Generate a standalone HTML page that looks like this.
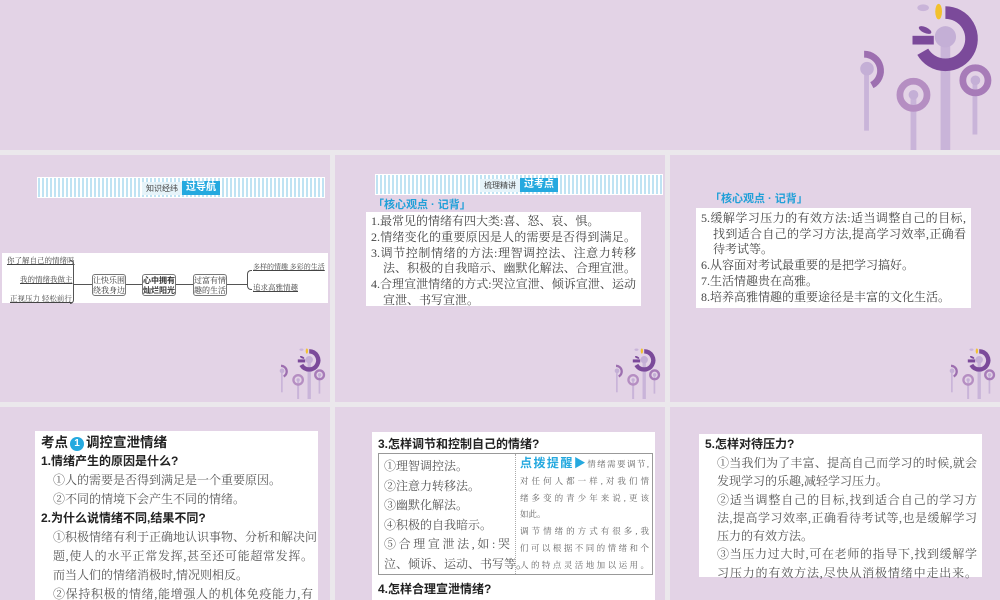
<!DOCTYPE html>
<html><head><meta charset="utf-8">
<style>
*{margin:0;padding:0;box-sizing:border-box}
body{width:1000px;height:600px;background:#ebe8ec;position:relative;overflow:hidden;font-family:"Liberation Serif","Noto Serif CJK SC",serif;color:#333}
.p{position:absolute;background:#e3d3e6;overflow:hidden}
.w{position:absolute;background:#fff}
.ban{position:absolute;height:21px;background:repeating-linear-gradient(90deg,#bfe3f3 0 2px,#fff 2px 4px);border:1px solid #fff}
.ban .t{position:absolute;left:50%;top:3px;transform:translateX(-50%);display:flex;align-items:center;font-family:"Liberation Sans","Noto Sans CJK SC",sans-serif;white-space:nowrap}
.ban .a{background:#e6f4fa;font-size:8px;color:#444;padding:1px 4px}
.ban .b{background:#25a9df;color:#fff;font-weight:bold;font-size:10px;padding:0 4px;line-height:14px}
.lab{position:absolute;font-family:"Liberation Sans","Noto Sans CJK SC",sans-serif;font-weight:bold;color:#21a0d8;font-size:11px}
.l{display:block;white-space:nowrap;text-align:justify;text-align-last:justify}
.s{text-align-last:left}
.i{margin-left:12px}
.q{font-family:"Liberation Sans","Noto Sans CJK SC",sans-serif;font-weight:bold;font-size:12px;color:#222;white-space:nowrap}
.fl{position:absolute}
.mm{font-size:7.5px;color:#444;position:absolute;white-space:nowrap}
.bx{position:absolute;border:1px solid #777;border-radius:3px;font-size:8px;line-height:10px;text-align:center;padding:1px 0;background:#fff}
</style></head><body>
<svg width="0" height="0" style="position:absolute">
<defs>
<symbol id="fl" viewBox="855 0 145 155">
<rect x="941" y="40" width="10" height="115" fill="#c9b4d9"/>
<path d="M946 13 A27 27 0 1 1 922.6 53.5" fill="none" stroke="#7b4a9a" stroke-width="13"/>
<rect x="912" y="37" width="22" height="9" fill="#7b4a9a"/>
<circle cx="946" cy="38" r="11" fill="#c4afd6"/>
<ellipse cx="939" cy="12" rx="3.5" ry="8" fill="#f2c12e"/>
<ellipse cx="923" cy="8" rx="6" ry="3.5" fill="#c9b4d9"/>
<ellipse cx="925" cy="31" rx="7" ry="3" fill="#7b4a9a" transform="rotate(25 925 31)"/>
<rect x="862" y="70" width="5" height="65" fill="#c9b4d9"/>
<path d="M862 56 A17 17 0 0 1 870 88" fill="none" stroke="#9d6fb0" stroke-width="7"/>
<circle cx="865" cy="71" r="7" fill="#c4afd6"/>
<rect x="910" y="99" width="6" height="56" fill="#c9b4d9"/>
<circle cx="913" cy="98" r="14" fill="none" stroke="#b58ec2" stroke-width="7"/>
<circle cx="913" cy="98" r="5" fill="#c4afd6"/>
<rect x="974" y="84" width="5" height="55" fill="#c9b4d9"/>
<circle cx="977" cy="83" r="13" fill="none" stroke="#a77bb8" stroke-width="7"/>
<circle cx="977" cy="83" r="5" fill="#c4afd6"/>
</symbol>
</defs>
</svg>

<div class="p" style="left:0;top:0;width:1000px;height:150px">
<svg class="fl" style="left:855px;top:0" width="145" height="150"><use href="#fl"/></svg>
</div>

<!-- row 2 panel 1 -->
<div class="p" style="left:0;top:155px;width:330px;height:247px">
<div class="ban" style="left:37px;top:22px;width:288px"><div class="t"><span class="a">知识经纬</span><span class="b">过导航</span></div></div>
<div class="w" style="left:2px;top:98px;width:326px;height:50px"></div>
<div class="mm" style="left:7px;top:100px;text-decoration:underline">你了解自己的情绪吗</div>
<div class="mm" style="left:20px;top:119px;text-decoration:underline">我的情绪我做主</div>
<div class="mm" style="left:10px;top:138px;text-decoration:underline">正视压力 轻松前行</div>
<div style="position:absolute;left:70px;top:105px;width:4px;height:44px;border:1px solid #555;border-left:none;border-radius:0 4px 4px 0"></div>
<div style="position:absolute;left:74px;top:129px;width:18px;border-top:1px solid #555"></div>
<div class="bx" style="left:92px;top:119px;width:34px;height:22px">让快乐围<br>绕我身边</div>
<div style="position:absolute;left:126px;top:129px;width:16px;border-top:1px solid #555"></div>
<div class="bx" style="left:142px;top:119px;width:34px;height:22px;font-weight:bold;font-family:'Liberation Sans','Noto Sans CJK SC',sans-serif">心中拥有<br>灿烂阳光</div>
<div style="position:absolute;left:176px;top:129px;width:17px;border-top:1px solid #555"></div>
<div class="bx" style="left:193px;top:119px;width:34px;height:22px">过富有情<br>趣的生活</div>
<div style="position:absolute;left:227px;top:129px;width:20px;border-top:1px solid #555"></div>
<div style="position:absolute;left:247px;top:115px;width:5px;height:20px;border:1px solid #555;border-right:none;border-radius:4px 0 0 4px"></div>
<div class="mm" style="left:253px;top:107px;text-decoration:underline;font-size:7px">多样的情趣 多彩的生活</div>
<div class="mm" style="left:253px;top:127px;text-decoration:underline">追求高雅情趣</div>
<svg class="fl" style="left:278px;top:192px" width="50" height="52"><use href="#fl"/></svg>
</div>

<!-- row 2 panel 2 -->
<div class="p" style="left:335px;top:155px;width:330px;height:247px">
<div class="ban" style="left:40px;top:19px;width:288px"><div class="t"><span class="a">梳理精讲</span><span class="b">过考点</span></div></div>
<div class="lab" style="left:38px;top:41px">「核心观点 · 记背」</div>
<div class="w" style="left:31px;top:57px;width:275px;height:94px;padding:2px 5px;font-size:12px;line-height:15.8px;color:#444">
<span class="l s">1.最常见的情绪有四大类:喜、怒、哀、惧。</span>
<span class="l">2.情绪变化的重要原因是人的需要是否得到满足。</span>
<span class="l">3.调节控制情绪的方法:理智调控法、注意力转移</span>
<span class="l i">法、积极的自我暗示、幽默化解法、合理宣泄。</span>
<span class="l">4.合理宣泄情绪的方式:哭泣宣泄、倾诉宣泄、运动</span>
<span class="l s i">宣泄、书写宣泄。</span>
</div>
<svg class="fl" style="left:278px;top:192px" width="50" height="52"><use href="#fl"/></svg>
</div>

<!-- row 2 panel 3 -->
<div class="p" style="left:670px;top:155px;width:330px;height:247px">
<div class="lab" style="left:40px;top:35px">「核心观点 · 记背」</div>
<div class="w" style="left:26px;top:53px;width:275px;height:100px;padding:3px 5px;font-size:12px;line-height:15.7px;color:#444">
<span class="l">5.缓解学习压力的有效方法:适当调整自己的目标,</span>
<span class="l i">找到适合自己的学习方法,提高学习效率,正确看</span>
<span class="l s i">待考试等。</span>
<span class="l s">6.从容面对考试最重要的是把学习搞好。</span>
<span class="l s">7.生活情趣贵在高雅。</span>
<span class="l s">8.培养高雅情趣的重要途径是丰富的文化生活。</span>
</div>
<svg class="fl" style="left:278px;top:192px" width="50" height="52"><use href="#fl"/></svg>
</div>

<!-- row 3 panel 1 -->
<div class="p" style="left:0;top:407px;width:330px;height:193px">
<div class="w" style="left:35px;top:24px;width:283px;height:180px;padding:2px 5px 0 6px;font-size:12px;line-height:19px;color:#555">
<div class="q" style="font-size:13.5px;line-height:19px">考点<span style="display:inline-block;width:14px;height:14px;border-radius:50%;background:#25a9df;color:#fff;text-align:center;line-height:14px;font-size:10px;margin:0 2px;vertical-align:1px">1</span>调控宣泄情绪</div>
<div class="q">1.情绪产生的原因是什么?</div>
<span class="l s i">①人的需要是否得到满足是一个重要原因。</span>
<span class="l s i">②不同的情境下会产生不同的情绪。</span>
<div class="q">2.为什么说情绪不同,结果不同?</div>
<span class="l i">①积极情绪有利于正确地认识事物、分析和解决问</span>
<span class="l i">题,使人的水平正常发挥,甚至还可能超常发挥。</span>
<span class="l s i">而当人们的情绪消极时,情况则相反。</span>
<span class="l i">②保持积极的情绪,能增强人的机体免疫能力,有</span>
</div>
</div>

<!-- row 3 panel 2 -->
<div class="p" style="left:335px;top:407px;width:330px;height:193px">
<div class="w" style="left:37px;top:25px;width:283px;height:180px">
<div class="q" style="position:absolute;left:6px;top:3px">3.怎样调节和控制自己的情绪?</div>
<div style="position:absolute;left:6px;top:21px;width:275px;height:122px;border:1px solid #999">
<div style="position:absolute;left:5px;top:3px;width:126px;font-size:12px;line-height:19.5px;color:#555">
<span class="l s">①理智调控法。</span><span class="l s">②注意力转移法。</span><span class="l s">③幽默化解法。</span><span class="l s">④积极的自我暗示。</span><span class="l">⑤合理宣泄法,如:哭</span><span class="l">泣、倾诉、运动、书写等。</span></div>
<div style="position:absolute;left:136px;top:0;height:120px;border-left:1px dotted #aaa"></div>
<div style="position:absolute;left:141px;top:1px;width:129px;font-size:8.5px;line-height:16.8px;color:#666">
<span class="l"><span style="color:#25a9df;font-weight:bold;font-size:12px;font-family:'Liberation Sans','Noto Sans CJK SC',sans-serif">点拨提醒▶</span>情绪需要调节,</span>
<span class="l">对任何人都一样,对我们情</span><span class="l">绪多变的青少年来说,更该</span><span class="l s">如此。</span><span class="l">调节情绪的方式有很多,我</span><span class="l">们可以根据不同的情绪和个</span><span class="l">人的特点灵活地加以运用。</span></div>
</div>
<div class="q" style="position:absolute;left:6px;top:148px">4.怎样合理宣泄情绪?</div>
</div>
</div>

<!-- row 3 panel 3 -->
<div class="p" style="left:670px;top:407px;width:330px;height:193px">
<div class="w" style="left:29px;top:27px;width:283px;height:143px;padding:1px 5px 0 6px;font-size:12px;line-height:18.3px;color:#555">
<div class="q" style="line-height:19px">5.怎样对待压力?</div>
<span class="l i">①当我们为了丰富、提高自己而学习的时候,就会</span>
<span class="l s i">发现学习的乐趣,减轻学习压力。</span>
<span class="l i">②适当调整自己的目标,找到适合自己的学习方</span>
<span class="l i">法,提高学习效率,正确看待考试等,也是缓解学习</span>
<span class="l s i">压力的有效方法。</span>
<span class="l i">③当压力过大时,可在老师的指导下,找到缓解学</span>
<span class="l i">习压力的有效方法,尽快从消极情绪中走出来。</span>
</div>
</div>
</body></html>
